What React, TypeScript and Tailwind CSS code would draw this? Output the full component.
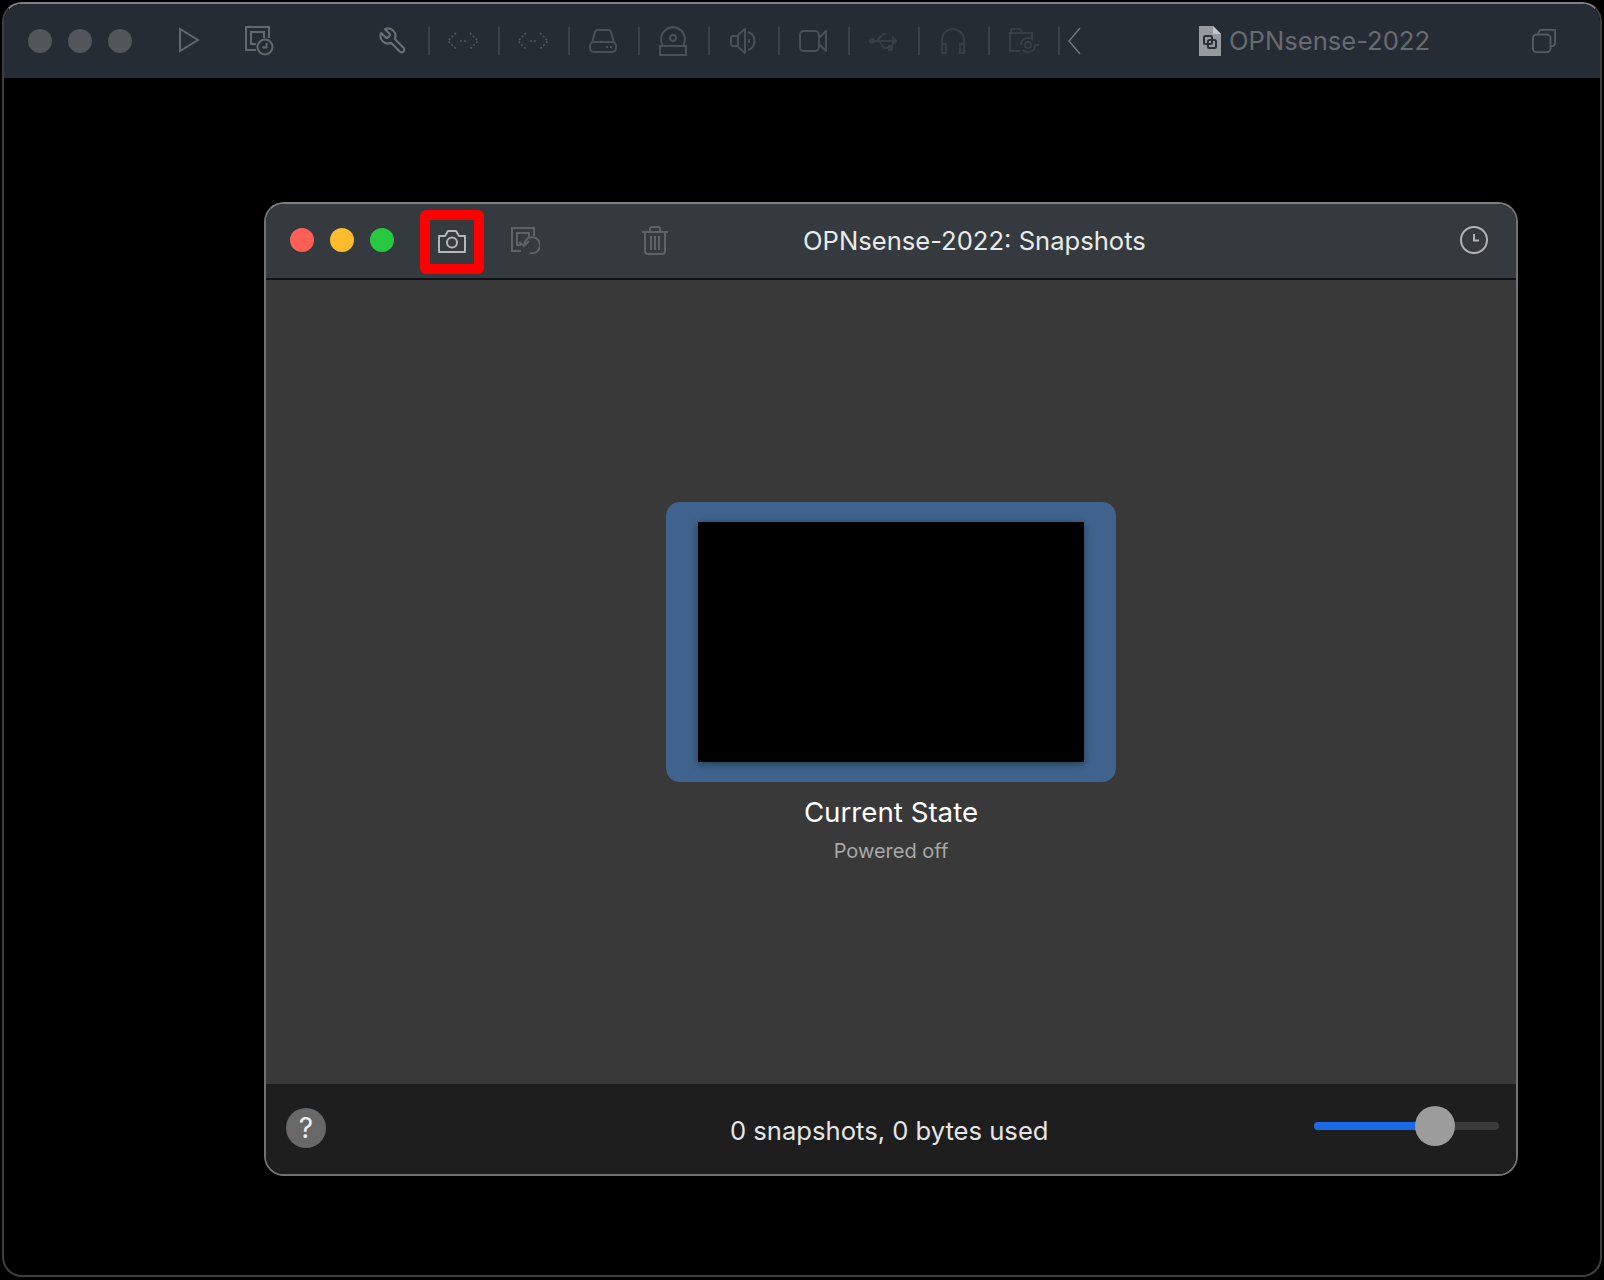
import type { ReactNode } from 'react'

const font = 'font-[Inter,"Liberation_Sans",sans-serif]'

function Slot({ children, width = 'w-[70px] pr-[3px]' }: { children?: ReactNode; width?: string }) {
  return (
    <div className={`flex h-7 shrink-0 items-center justify-center border-l-2 border-[#3b4147] ${width}`}>
      {children}
    </div>
  )
}

function NetIcon() {
  return (
    <svg width="32" height="18" viewBox="0 0 32 18" fill="none" stroke="#53585d" strokeWidth="1.6" strokeDasharray="2 2">
      <path d="M9 1 L1 9 L9 17" />
      <path d="M23 1 L31 9 L23 17" />
      <path d="M13 9 H20" />
    </svg>
  )
}

function Toolbar() {
  return (
    <div className="flex h-[74px] shrink-0 items-center bg-[#262c33] pl-[24px]">
      <div className="flex gap-4">
        <div className="h-6 w-6 rounded-full bg-[#50565a]" />
        <div className="h-6 w-6 rounded-full bg-[#50565a]" />
        <div className="h-6 w-6 rounded-full bg-[#50565a]" />
      </div>
      <svg className="ml-[46px] -mt-[2px]" width="22" height="26" viewBox="0 0 22 26" fill="none" stroke="#63686c" strokeWidth="2">
        <path d="M2 2 V24 L20 13 Z" />
      </svg>
      <svg className="ml-[44px]" width="30" height="32" viewBox="0 0 30 32" fill="none" stroke="#63686c" strokeWidth="2">
        <path d="M12 25 H2 V2 H25 V13" />
        <path d="M12 19 H7 V7 H20 V13" />
        <circle cx="21" cy="22" r="7.5" />
        <path d="M22.5 18 V22.5 H18" />
      </svg>
      <svg className="ml-[104px] -scale-x-100" width="30" height="30" viewBox="0 0 24 24" fill="none" stroke="#6a6f73" strokeWidth="1.7" strokeLinejoin="round">
        <path d="M14.7 6.3a1 1 0 0 0 0 1.4l1.6 1.6a1 1 0 0 0 1.4 0l3.77-3.77a6 6 0 0 1-7.94 7.94l-6.91 6.91a2.12 2.12 0 0 1-3-3l6.91-6.91a6 6 0 0 1 7.94-7.94l-3.76 3.76z" />
      </svg>
      <div className="ml-[20px] flex items-center">
        <Slot><NetIcon /></Slot>
        <Slot><NetIcon /></Slot>
        <Slot>
          <svg width="28" height="24" viewBox="0 0 28 24" fill="none" stroke="#4b5056" strokeWidth="2">
            <path d="M3 14 L6 3 Q6.5 1 9 1 H19 Q21.5 1 22 3 L25 14" />
            <rect x="1" y="13" width="26" height="10" rx="4" />
            <path d="M17 18 H19 M21 18 H23" />
          </svg>
        </Slot>
        <Slot>
          <svg width="28" height="30" viewBox="0 0 28 30" fill="none" stroke="#4b5056" strokeWidth="2">
            <path d="M4 20 A12 12 0 1 1 24 20" />
            <circle cx="14" cy="12" r="3" />
            <rect x="1" y="20" width="26" height="9" />
          </svg>
        </Slot>
        <Slot>
          <svg width="26" height="28" viewBox="0 0 26 28" fill="none" stroke="#4b5056" strokeWidth="2" strokeLinejoin="round">
            <path d="M8 9 H3 Q1 9 1 11 V17 Q1 19 3 19 H8" />
            <path d="M8 8 L15 2 V26 L8 20 Z" />
            <path d="M18 5 A9.5 9.5 0 0 1 18 23" />
            <path d="M19 12 V16" />
          </svg>
        </Slot>
        <Slot>
          <svg width="28" height="24" viewBox="0 0 28 24" fill="none" stroke="#4b5056" strokeWidth="2" strokeLinejoin="round">
            <rect x="1" y="2" width="19" height="20" rx="4" />
            <path d="M20 9 L27 2 V22 L20 15" />
          </svg>
        </Slot>
        <Slot>
          <svg width="28" height="20" viewBox="0 0 28 20" fill="none" stroke="#383e44" strokeWidth="2">
            <circle cx="3" cy="10" r="2" fill="#383e44" />
            <path d="M3 10 H25 M8 10 L14 3 H17 M10 10 L15 17 H20" />
            <path d="M24 7 L27 10 L24 13 Z" fill="#383e44" />
            <rect x="20" y="15" width="3" height="4" fill="#383e44" />
          </svg>
        </Slot>
        <Slot>
          <svg width="26" height="28" viewBox="0 0 26 28" fill="none" stroke="#383e44" strokeWidth="2">
            <path d="M2 18 V13 A11 11 0 0 1 24 13 V18" />
            <rect x="2" y="17" width="4" height="9" />
            <rect x="20" y="17" width="4" height="9" />
          </svg>
        </Slot>
        <Slot width="w-[70px]">
          <svg width="30" height="28" viewBox="0 0 30 28" fill="none" stroke="#383e44" strokeWidth="2">
            <path d="M11 24 H1 V6 H23 V13" />
            <path d="M2 6 V2 H11 L13 6" />
            <circle cx="19" cy="18" r="3" />
            <path d="M12 18 A7 7 0 0 1 24 13 M26 18 A7 7 0 0 1 14 23 M26 18 H30" />
          </svg>
        </Slot>
        <Slot width="w-[26px] pr-[3px]">
          <svg className="ml-[6px] shrink-0" width="14" height="28" viewBox="0 0 14 28" fill="none" stroke="#74787c" strokeWidth="1.4">
            <path d="M13 1 L2 14 L13 27" />
          </svg>
        </Slot>
      </div>
      <svg className="ml-[115px]" width="22" height="30" viewBox="0 0 22 30">
        <path d="M0 0 H14 L22 8 V30 H0 Z" fill="#959a9e" />
        <path d="M14 0 L22 8 H14 Z" fill="#c4c7c9" />
        <rect x="5" y="10" width="8" height="8" rx="1.5" fill="none" stroke="#2b3036" strokeWidth="2" />
        <rect x="9" y="14" width="8" height="8" rx="1.5" fill="none" stroke="#2b3036" strokeWidth="2" />
      </svg>
      <span className="ml-[8px] text-[25.6px] leading-none text-[#666b70]">OPNsense-2022</span>
      <svg className="ml-[102px]" width="24" height="24" viewBox="0 0 26 26" fill="none" stroke="#565b60" strokeWidth="2">
        <rect x="1" y="6" width="19" height="19" rx="4" />
        <path d="M7 6 V5 Q7 1 11 1 H25 V15 Q25 19 20 19" />
      </svg>
    </div>
  )
}

function SnapshotsWindow() {
  return (
    <div className="relative ml-[260px] mt-[124px] flex h-[974px] w-[1254px] flex-col overflow-hidden rounded-[20px] border-2 border-[#707376] border-t-[#7e8183]">
      <div className="flex h-[76px] shrink-0 items-center border-b-2 border-[#111213] bg-[#343a3d] pb-[2px] pl-[24px]">
        <div className="flex gap-4">
          <div className="h-6 w-6 rounded-full bg-[#ff5f57]" />
          <div className="h-6 w-6 rounded-full bg-[#febc2e]" />
          <div className="h-6 w-6 rounded-full bg-[#28c840]" />
        </div>
        <svg className="ml-[44px] mt-[2px]" width="28" height="23" viewBox="0 0 28 23" fill="none" stroke="#b4b7b9" strokeWidth="2" strokeLinejoin="round">
          <path d="M1 6 H7 L10 1 H18 L21 6 H27 V22 H1 Z" />
          <circle cx="14" cy="12.5" r="5" />
        </svg>
        <svg className="ml-[44px] mt-[4px]" width="30" height="32" viewBox="0 0 30 32" fill="none" stroke="#5e6366" strokeWidth="2">
          <path d="M11 25 H2 V2 H24 V10" />
          <path d="M11 19 H7 V7 H19 V11" />
          <path d="M14 19 A8 8 0 1 1 20 27" />
          <path d="M19 15 L14 20 L9 16" />
        </svg>
        <svg className="ml-[102px]" width="26" height="29" viewBox="0 0 26 29" fill="none" stroke="#5e6366" strokeWidth="2">
          <path d="M0 6 H26 M8 6 V3 Q8 1 10 1 H16 Q18 1 18 3 V6" />
          <path d="M3 6 V25 Q3 28 6 28 H20 Q23 28 23 25 V6" />
          <path d="M9 10 V24 M13 10 V24 M17 10 V24" />
        </svg>
        <span className="ml-[135px] pt-[2px] text-[25.6px] leading-none text-[#e9eaea]">OPNsense-2022: Snapshots</span>
        <svg className="ml-auto mr-[28px]" width="28" height="28" viewBox="0 0 28 28" fill="none" stroke="#b0b3b5" strokeWidth="2">
          <circle cx="14" cy="14" r="13" />
          <path d="M14 8 V14.5 H19" strokeWidth="2" />
        </svg>
      </div>

      <div className="flex flex-1 flex-col items-center bg-[#393939] pt-[222px]">
        <div className="flex h-[280px] w-[450px] items-center justify-center rounded-[14px] bg-[#3f638c]">
          <div className="h-[240px] w-[386px] bg-black shadow-[0_2px_8px_rgba(0,0,0,0.4)]" />
        </div>
        <div className="mt-[13px] text-[27.7px] leading-[34px] text-white">Current State</div>
        <div className="mt-[10px] text-[20px] leading-[24px] text-[#a8a8a8]">Powered off</div>
      </div>

      <div className="flex h-[90px] shrink-0 items-center bg-[#1e1e1e] pb-[2px] pl-[20px]">
        <div className="flex h-10 w-10 items-center justify-center rounded-full bg-[#686868] text-[28px] leading-none text-[#f0f0f0]">?</div>
        <span className="ml-[404px] pt-[6px] text-[25.6px] leading-none text-[#e6e6e6]">0 snapshots, 0 bytes used</span>
        <div className="relative mb-[4px] ml-auto mr-[17px] h-2 w-[185px] rounded-full bg-[#3b3b3b]">
          <div className="h-2 w-[110px] rounded-l-full bg-[#1a6ae8]" />
          <div className="absolute left-[101px] top-[-16px] h-10 w-10 rounded-full bg-[#9c9c9c]" />
        </div>
      </div>

      <div className="absolute left-[154px] top-[6px] h-16 w-16 rounded-[6px] border-[10px] border-[#ff0000]" />
    </div>
  )
}

export default function App() {
  return (
    <div className={`h-[1280px] w-[1604px] overflow-hidden bg-black pl-[2px] pt-[2px] ${font}`}>
      <div className="flex h-[1275px] w-[1600px] flex-col overflow-hidden rounded-[20px] border-2 border-[#3f3f3f] border-t-[#7e8185]">
        <Toolbar />
        <SnapshotsWindow />
      </div>
    </div>
  )
}
